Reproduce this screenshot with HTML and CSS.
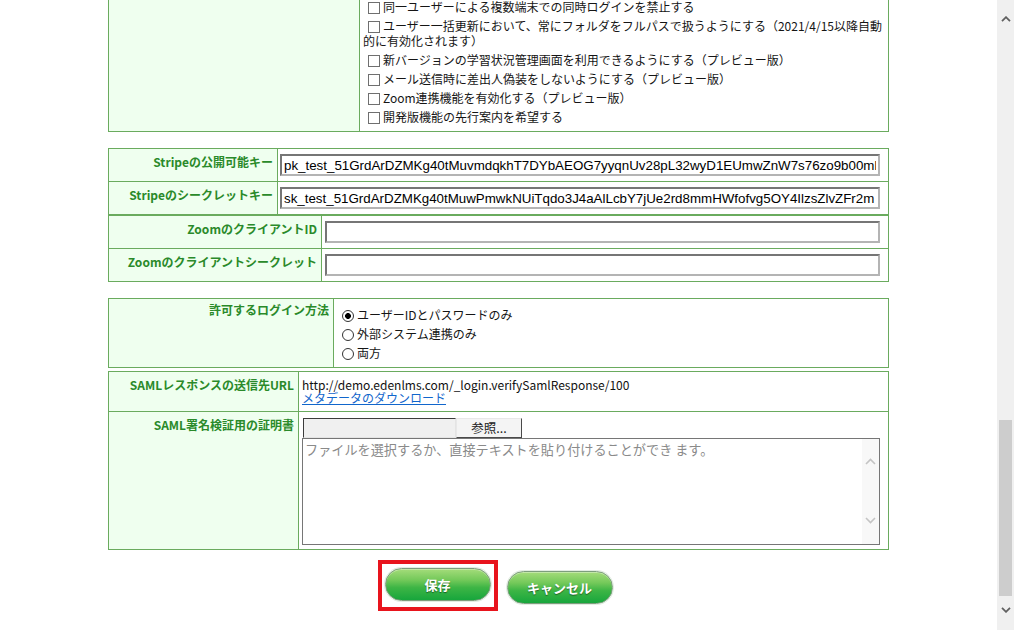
FILE: index.html
```html
<!DOCTYPE html>
<html lang="ja">
<head>
<meta charset="utf-8">
<title>システム設定</title>
<link rel="stylesheet" href="styles.css">
</head>
<body>
<div class="window">
  <main class="page">
    <section class="form-table t-options">
      <div class="label-cell"></div>
      <div class="value-cell options">
        <div class="opt"><label><input type="checkbox" class="chk">同一ユーザーによる複数端末での同時ログインを禁止する</label></div>
        <div class="opt"><label><input type="checkbox" class="chk">ユーザー一括更新において、常にフォルダをフルパスで扱うようにする（2021/4/15以降自動的に有効化されます）</label></div>
        <div class="opt"><label><input type="checkbox" class="chk">新バージョンの学習状況管理画面を利用できるようにする（プレビュー版）</label></div>
        <div class="opt"><label><input type="checkbox" class="chk">メール送信時に差出人偽装をしないようにする（プレビュー版）</label></div>
        <div class="opt"><label><input type="checkbox" class="chk">Zoom連携機能を有効化する（プレビュー版）</label></div>
        <div class="opt"><label><input type="checkbox" class="chk">開発版機能の先行案内を希望する</label></div>
      </div>
    </section>

    <section class="form-table t-stripe">
      <div class="label-cell">Stripeの公開可能キー</div>
      <div class="value-cell field"><input class="text-input w-stripe" type="text" value="pk_test_51GrdArDZMKg40tMuvmdqkhT7DYbAEOG7yyqnUv28pL32wyD1EUmwZnW7s76zo9b00ml"></div>
      <div class="label-cell">Stripeのシークレットキー</div>
      <div class="value-cell field"><input class="text-input w-stripe" type="text" value="sk_test_51GrdArDZMKg40tMuwPmwkNUiTqdo3J4aAlLcbY7jUe2rd8mmHWfofvg5OY4IlzsZlvZFr2m"></div>
    </section>

    <section class="form-table t-zoom">
      <div class="label-cell">ZoomのクライアントID</div>
      <div class="value-cell field zfield"><input class="text-input w-zoom" type="text"></div>
      <div class="label-cell">Zoomのクライアントシークレット</div>
      <div class="value-cell field zfield"><input class="text-input w-zoom" type="text"></div>
    </section>

    <section class="form-table t-login">
      <div class="label-cell label-login">許可するログイン方法</div>
      <div class="value-cell radios">
        <div class="opt"><label><input type="radio" name="login" class="rad" checked>ユーザーIDとパスワードのみ</label></div>
        <div class="opt"><label><input type="radio" name="login" class="rad">外部システム連携のみ</label></div>
        <div class="opt"><label><input type="radio" name="login" class="rad">両方</label></div>
      </div>
    </section>

    <section class="form-table t-saml">
      <div class="label-cell">SAMLレスポンスの送信先URL</div>
      <div class="value-cell url-cell">
        <div class="url-line">http://demo.edenlms.com/_login.verifySamlResponse/100</div>
        <div class="url-line"><a href="#" class="link">メタデータのダウンロード</a></div>
      </div>
      <div class="label-cell">SAML署名検証用の証明書</div>
      <div class="value-cell cert-cell">
        <div class="file-row">
          <span class="file-box"></span>
          <span class="file-btn">参照...</span>
        </div>
        <div class="area-wrap">
          <textarea class="area" placeholder="ファイルを選択するか、直接テキストを貼り付けることができ ます。"></textarea>
          <div class="area-scroll">
            <svg width="11" height="7" viewBox="0 0 11 7"><polyline points="1,6 5.5,1.5 10,6" fill="none" stroke="#c4c4c4" stroke-width="1.6"/></svg>
            <svg width="11" height="7" viewBox="0 0 11 7"><polyline points="1,1 5.5,5.5 10,1" fill="none" stroke="#c4c4c4" stroke-width="1.6"/></svg>
          </div>
        </div>
      </div>
    </section>

    <div class="actions">
      <div class="save-wrap"><button class="btn" type="button">保存</button></div>
      <button class="btn btn-cancel" type="button">キャンセル</button>
    </div>
  </main>

  <div class="vscroll">
    <div class="sb-btn sb-up">
      <svg width="10" height="6" viewBox="0 0 10 6"><polyline points="1,5.2 5,1.2 9,5.2" fill="none" stroke="#606060" stroke-width="1.8"/></svg>
    </div>
    <div class="sb-track"><div class="sb-thumb"></div></div>
    <div class="sb-btn sb-down">
      <svg width="10" height="6" viewBox="0 0 10 6"><polyline points="1,0.8 5,4.8 9,0.8" fill="none" stroke="#606060" stroke-width="1.8"/></svg>
    </div>
  </div>
</div>
</body>
</html>
```

FILE: styles.css
```css
* { box-sizing: border-box; }

html, body {
  margin: 0;
  padding: 0;
  background: #ffffff;
}

body {
  font-family: "Noto Sans CJK JP", "Noto Sans", sans-serif;
  font-size: 12px;
  color: #111;
}

.window {
  display: flex;
  width: 1014px;
  height: 630px;
  overflow: hidden;
}

.page {
  flex: 1;
  min-width: 0;
  display: flex;
  flex-direction: column;
  align-items: center;
}

/* ---------- form tables ---------- */
.form-table {
  display: grid;
  width: 781px;
  gap: 1px;
  padding: 1px;
  background: #6aab5e;
  flex: none;
}

.label-cell {
  background: #efffef;
  color: #2a8a2a;
  font-weight: bold;
  font-size: 12px;
  line-height: 15px;
  text-align: right;
  padding: 5px 4px 0 4px;
  white-space: nowrap;
}
.label-login {
  padding-top: 3px;
}

.value-cell {
  background: #ffffff;
}

.t-options {
  grid-template-columns: 250px 1fr;
  margin-top: -7px;
}
.t-stripe { grid-template-columns: 168px 1fr; margin-top: 16px; }
.t-zoom   { grid-template-columns: 212px 1fr; }
.t-login  { grid-template-columns: 224px 1fr; margin-top: 16px; }
.t-saml   { grid-template-columns: 189px 1fr; margin-top: 3px; }

/* option lists */
.options {
  padding: 3px 3px 5px 3px;
}
.radios {
  padding: 6px 3px 5px 3px;
}

.opt {
  font-size: 12px;
  line-height: 15px;
  padding: 2px 0;
  color: #151515;
}

.chk {
  -webkit-appearance: none;
  appearance: none;
  display: inline-block;
  width: 12px;
  height: 12px;
  margin: 0 3px 0 5px;
  vertical-align: -2px;
  border: 1px solid #6f6f6f;
  background: #fff;
  border-radius: 0;
}

.rad {
  -webkit-appearance: none;
  appearance: none;
  display: inline-block;
  width: 12px;
  height: 12px;
  margin: 0 3px 0 5px;
  vertical-align: -2px;
  border: 1px solid #333;
  border-radius: 50%;
  background: #fff;
}
.rad:checked {
  background: radial-gradient(circle, #000 0 2.6px, #fff 3.2px);
}

/* text fields */
.field {
  padding: 5px 2px;
}
.zfield {
  padding: 5px 3px;
}

.text-input {
  display: block;
  height: 22px;
  margin: 0;
  padding: 1px 2px;
  font-family: "Liberation Sans", Arial, sans-serif;
  font-size: 13.33px;
  color: #000;
  background: #fff;
  border-style: solid;
  border-width: 2px;
  border-color: #767676 #b4b4b4 #b4b4b4 #767676;
  outline: none;
  border-radius: 0;
}
.w-stripe { width: 600px; }
.w-zoom { width: 555px; }

/* SAML */
.url-cell {
  padding: 6px 3px 7px 3px;
  font-size: 12px;
  color: #111;
}
.url-line {
  height: 13px;
  line-height: 13px;
}
.link {
  color: #1166cc;
  text-decoration: underline;
}

.cert-cell {
  padding: 6px 3px 4px 3px;
}

.file-row {
  display: flex;
  height: 20px;
  padding-left: 1px;
}
.file-box {
  width: 153px;
  height: 20px;
  background: #f0f0f0;
  border-style: solid;
  border-width: 1px;
  border-color: #3c3c3c #e4e4e4 #e4e4e4 #3c3c3c;
}
.file-btn {
  width: 66px;
  height: 20px;
  background: #f4f4f4;
  border-style: solid;
  border-width: 1px;
  border-color: #e8e8e8 #4a4a4a #4a4a4a #e8e8e8;
  font-size: 12.5px;
  line-height: 18px;
  text-align: center;
  color: #222;
}

.area-wrap {
  display: flex;
  width: 578px;
  height: 107px;
  border: 1px solid #767676;
  background: #fff;
}
.area {
  flex: 1;
  min-width: 0;
  border: none;
  outline: none;
  resize: none;
  overflow: hidden;
  margin: 0;
  padding: 2px 2px;
  font-family: "Noto Sans CJK JP", sans-serif;
  font-size: 13.15px;
  line-height: 17px;
  background: #fff;
}
.area::placeholder {
  color: #8a8a8a;
}
.area-scroll {
  width: 17px;
  background: #f8f8f8;
  display: flex;
  flex-direction: column;
  align-items: center;
  justify-content: space-between;
  padding: 19px 0 20px;
}

/* buttons */
.actions {
  display: flex;
  justify-content: center;
  align-items: flex-start;
  gap: 16px;
  padding-top: 18px;
  width: 100%;
  flex: none;
}

.save-wrap {
  position: relative;
}
.save-wrap::after {
  content: "";
  position: absolute;
  left: -7px;
  right: -7px;
  top: -8px;
  bottom: -10px;
  border: 4px solid #e8141d;
  pointer-events: none;
}

.btn {
  display: block;
  width: 106px;
  height: 33px;
  margin: 0;
  padding: 0;
  border: 1px solid #7d9d7d;
  border-radius: 17px;
  background: linear-gradient(to bottom, #a4dc7a 0%, #74c95a 35%, #3db545 60%, #17a63c 100%);
  box-shadow: 0 0 0 1px #e2ece2, inset 0 1px 0 rgba(255,255,255,0.35);
  color: #ffffff;
  font-family: "Noto Sans CJK JP", sans-serif;
  font-weight: bold;
  font-size: 13px;
  text-shadow: 0 1px 1px rgba(0,0,0,0.45);
  cursor: pointer;
}
.btn-cancel {
  margin-top: 3px;
}

/* page scrollbar */
.vscroll {
  width: 17px;
  flex: none;
  background: #f0f0f0;
  display: flex;
  flex-direction: column;
}
.sb-btn {
  display: flex;
  justify-content: center;
  flex: none;
}
.sb-up {
  height: 36px;
  align-items: center;
  padding-top: 2px;
}
.sb-track {
  flex: 1;
  padding: 384px 2px 0 2px;
}
.sb-thumb {
  height: 176px;
  background: #cdcdcd;
}
.sb-down {
  height: 34px;
  align-items: flex-start;
  padding-top: 11px;
}
```
